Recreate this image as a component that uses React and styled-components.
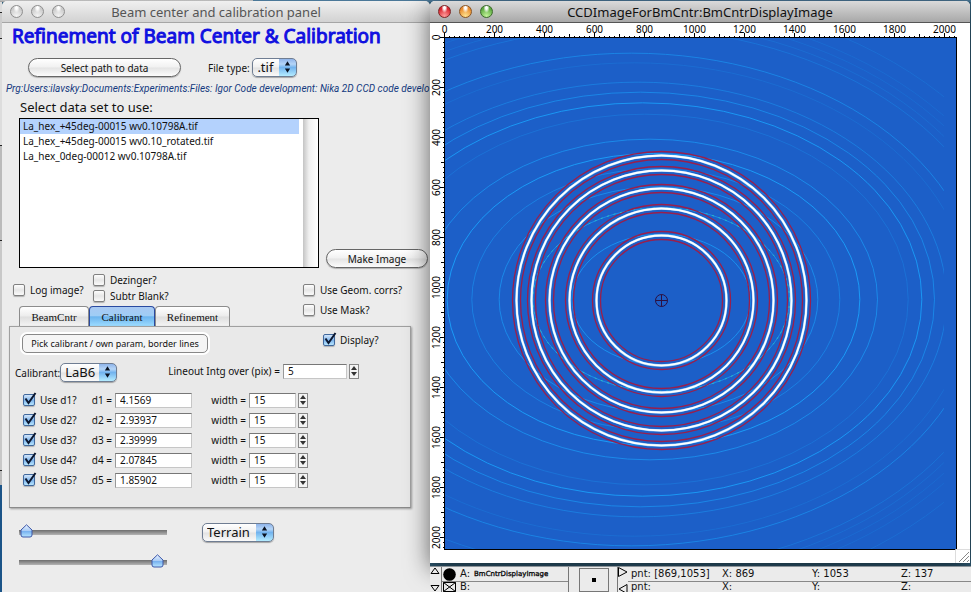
import React from "react";
import styled, { createGlobalStyle, css } from "styled-components";

const uiFont = '"Noto Sans", "Open Sans", sans-serif';
const svgUrl = (markup) => `url("data:image/svg+xml,${encodeURIComponent(markup)}")`;

const tick = svgUrl(
  '<svg xmlns="http://www.w3.org/2000/svg" viewBox="0 0 14 14"><path d="M2.5 6.5 L5.5 11 L12.5 1" fill="none" stroke="#0b1730" stroke-width="2"/></svg>'
);
const popupArrows = svgUrl(
  '<svg xmlns="http://www.w3.org/2000/svg" viewBox="0 0 18 18" preserveAspectRatio="none"><defs><linearGradient id="g" x2="0" y2="1"><stop offset="0" stop-color="#8fb4ea"/><stop offset=".3" stop-color="#b5d5f7"/><stop offset=".5" stop-color="#72b3ee"/><stop offset="1" stop-color="#b4ecff"/></linearGradient></defs><rect width="18" height="18" fill="url(#g)"/><path d="M9 2.5 L11.8 7 H6.2 Z M9 14.5 L11.8 10 H6.2 Z" fill="#0a1220"/></svg>'
);
const thumb = svgUrl(
  '<svg xmlns="http://www.w3.org/2000/svg" viewBox="0 0 13 14"><defs><linearGradient id="g" x2="0" y2="1"><stop offset="0" stop-color="#e8f1ff"/><stop offset=".5" stop-color="#a8cbf5"/><stop offset=".55" stop-color="#78b2f0"/><stop offset="1" stop-color="#b9e6ff"/></linearGradient></defs><path d="M6.500 .8 L12 6 V11 Q12 13 10 13 H3 Q1 13 1 11 V6 Z" fill="url(#g)" stroke="#3c56a8" stroke-width="1"/></svg>'
);

const GlobalStyle = createGlobalStyle`
  * { box-sizing: border-box; }
  body { margin: 0; overflow: hidden; font-family: ${uiFont}; font-size: 10px; color: #111; }
  button, input, select { font-family: inherit; font-size: inherit; color: inherit; margin: 0; }
`;

const Desktop = styled.div`
  display: flex;
  height: 100vh;
  padding: 1px 0 0 2px;
  overflow: hidden;
  background:
    linear-gradient(#c4c4c4, #9a9a9a) 0 0 / 253px 2px no-repeat,
    linear-gradient(#4b7898, #4b7898) 0 0 / 100% 2px no-repeat,
    linear-gradient(#dcdcdc 0 12px, #222 12px 13px, #ccc 13px 38px, #222 38px 39px, #ddd 39px 145px, #222 145px 146px, #bbb 146px 240px, #222 240px 241px, #c8c8c8 241px 470px, #222 470px 471px, #bbb 471px 485px, #1b5488 485px) 0 0 / 2px 100% no-repeat,
    #315e78;
`;

const PanelWindow = styled.main`
  flex: 0 1 428px;
  min-width: 0;
  display: flex;
  flex-direction: column;
  overflow: hidden;
  background: #ececec;
  border-radius: 5px 5px 0 0;
`;

const RightColumn = styled.div`
  flex: 1;
  min-width: 0;
  display: flex;
  flex-direction: column;
  z-index: 1;
`;

const ImageWindow = styled.section`
  margin-right: 1px;
  background: #fff;
  border-radius: 5px 5px 0 0;
  box-shadow: 0 6px 24px rgba(0, 0, 0, 0.6);
`;

const TitleBar = styled.header`
  flex: none;
  display: grid;
  grid-template-columns: 60px 1fr 60px;
  align-items: center;
  height: 22px;
  padding: 0 8px;
  border-radius: 5px 5px 0 0;
  border-bottom: 1px solid ${(p) => (p.$active ? "#555" : "#a5a5a5")};
  background: ${(p) =>
    p.$active ? "linear-gradient(#dadada, #a8a8a8)" : "linear-gradient(#f0f0f0, #d2d2d2)"};
  color: ${(p) => (p.$active ? "#111" : "#555")};
`;

const WindowTitle = styled.h2`
  margin: 0;
  font-size: 13px;
  line-height: 20px;
  font-weight: 400;
  text-align: center;
  white-space: nowrap;
`;

const Lights = styled.div`
  display: flex;
  gap: 8px;
`;

const Light = styled.button`
  width: 13px;
  height: 13px;
  padding: 0;
  border: 1px solid ${(p) => p.$edge};
  border-radius: 50%;
  background: radial-gradient(ellipse at 50% 15%, #fff 0 12%, transparent 40%),
    radial-gradient(circle at 50% 90%, ${(p) => p.$glow}, ${(p) => p.$fill} 70%);
`;

const Heading = styled.h1`
  margin: 0 0 9px 10px;
  font-size: 19px;
  line-height: 26px;
  font-weight: 400;
  color: #1010e0;
  -webkit-text-stroke: 1px #1010e0;
  white-space: nowrap;
`;

const FileRow = styled.div`
  display: flex;
  align-items: center;
  padding-left: 26px;
`;

const pill = css`
  height: 19px;
  padding: 0;
  line-height: 16px;
  white-space: nowrap;
  border: 1px solid #666;
  background: linear-gradient(#fff, #f1f1f1 48%, #e4e4e4 52%, #fcfcfc);
`;

const PillButton = styled.button`
  ${pill}
  width: ${(p) => p.$width};
  border-radius: 10px;
  box-shadow: 0 1px 1px rgba(0, 0, 0, 0.25);
`;

const WideButton = styled.button`
  ${pill}
  width: 186px;
  font-size: 9px;
  border-color: #888;
  border-radius: 5px;
  background: #f5f5f5;
  box-shadow: 0 0 0 2px #fff;
`;

const Caption = styled.label`
  white-space: nowrap;
  line-height: 16px;
  margin-left: ${(p) => p.$gap || "0"};
`;

const Popup = styled.select`
  appearance: none;
  width: ${(p) => p.$width};
  height: 19px;
  padding: 0 0 1px 4px;
  font-size: 13px;
  line-height: 16px;
  border: 1px solid #6f7d92;
  border-radius: 5px;
  background: ${popupArrows} right center / 17px 100% no-repeat,
    linear-gradient(#fff, #f0f0f0 48%, #e2e2e2 52%, #fafafa);
  box-shadow: 0 1px 1px rgba(0, 0, 0, 0.3);
`;

const PathText = styled.p`
  margin: 4px 0 1px 4px;
  font-family: Roboto, sans-serif;
  line-height: 16px;
  font-style: italic;
  color: #143a80;
  white-space: nowrap;
`;

const ListLabel = styled.h3`
  margin: 0 0 2px 18px;
  font-size: 13px;
  line-height: 18px;
  font-weight: 400;
`;

const ListRow = styled.div`
  display: flex;
  align-items: flex-end;
  justify-content: space-between;
  gap: 7px;
  padding: 0 2px 0 17px;
`;

const ListBox = styled.div`
  flex: 1;
  display: grid;
  grid-template-columns: 1fr 15px;
  height: 150px;
  border: 1px solid #000;
  background: #fff;
`;

const FileList = styled.ul`
  margin: 0 4px 0 0;
  padding: 0;
  list-style: none;
`;

const FileItem = styled.li`
  height: 15px;
  padding-left: 3px;
  line-height: 15px;
  white-space: nowrap;
  background: ${(p) => (p.$selected ? "#b4d2fd" : "transparent")};
`;

const ScrollTrack = styled.div`
  background: linear-gradient(90deg, #c4c4c4, #f0f0f0 40%, #fff);
`;

const Options = styled.div`
  display: grid;
  grid-template-columns: 80px 210px 1fr;
  padding: 4px 0 0 11px;
  height: 38px;
`;

const OptionColumn = styled.div`
  display: flex;
  flex-direction: column;
  gap: ${(p) => p.$gap || "0"};
  padding-top: ${(p) => p.$top || "0"};
`;

const CheckLabel = styled.label`
  display: flex;
  align-items: center;
  gap: 5px;
  height: 16px;
  line-height: 16px;
  white-space: nowrap;
`;

const Check = styled.input`
  appearance: none;
  position: relative;
  flex: none;
  width: 12px;
  height: 12px;
  border: 1px solid #808080;
  border-radius: 2px;
  background: linear-gradient(#fdfdfd, #e6e6e6 50%, #fafafa);
  box-shadow: 0 1px 1px rgba(0, 0, 0, 0.25);
  &:checked {
    border-color: #41689c;
    background: linear-gradient(#d3e6fb, #7fb5ec 55%, #b8e6ff);
  }
  &:checked::after {
    content: "";
    position: absolute;
    inset: -3px -3px -1px -1px;
    background: ${tick} center / 100% 100% no-repeat;
  }
`;

const Tabs = styled.div`
  display: flex;
  margin: 0 0 0 17px;
`;

const Tab = styled.button`
  width: ${(p) => p.$width};
  height: 20px;
  padding: 0;
  font-family: "Liberation Serif", serif;
  font-size: 11px;
  border: 1px solid ${(p) => (p.$selected ? "#2a4aa0" : "#8c8c8c")};
  border-bottom: 0;
  border-radius: 4px 4px 0 0;
  background: ${(p) =>
    p.$selected
      ? "linear-gradient(#a9c9f2, #9fcdf5 45%, #6cb4ee 52%, #9ddcff)"
      : "linear-gradient(#fff, #ececec 48%, #dedede 52%, #f4f4f4)"};
`;

const TabPanel = styled.section`
  margin: 0 19px 15px 7px;
  padding: 7px 6px 19px 5px;
  border: 1px solid #a0a0a0;
  border-bottom-color: #8a8a8a;
  background: #e9e9e9;
  box-shadow: 1px 1px 2px rgba(0, 0, 0, 0.35);
`;

const PanelRow = styled.div`
  display: flex;
  align-items: flex-start;
  padding-left: ${(p) => p.$indent || "0"};
  margin-bottom: ${(p) => p.$below || "0"};
`;

const DisplayToggle = styled.div`
  margin-left: 115px;
  margin-top: -2px;
`;

const Field = styled.div`
  display: flex;
  align-items: center;
  justify-content: flex-end;
`;

const NumberBox = styled.input`
  width: ${(p) => p.$width};
  height: 15px;
  margin-left: 3px;
  padding: 0 4px;
  border: 1px solid #c6c6c6;
  border-top-color: #777;
  border-left-color: #999;
  border-radius: 0;
  background: #fff;
`;

const Stepper = styled.div`
  display: flex;
  flex-direction: column;
  width: 10px;
  height: 15px;
  margin-left: 2px;
  border: 1px solid #888;
  background: #f4f4f4;
`;

const StepButton = styled.button`
  flex: 1;
  display: flex;
  align-items: center;
  justify-content: center;
  min-height: 0;
  padding: 0;
  border: 0;
  background: none;
`;

const Peaks = styled.div`
  display: grid;
  gap: 4px;
  padding-left: 8px;
`;

const PeakRow = styled.div`
  display: grid;
  grid-template-columns: 59px 110px 116px;
  align-items: center;
  height: 16px;
`;

const Footer = styled.div`
  display: grid;
  grid-template-columns: 148px 1fr;
  column-gap: 35px;
  row-gap: 11px;
  align-items: center;
  padding-left: 17px;
`;

const Slider = styled.input`
  appearance: none;
  width: 100%;
  height: 19px;
  background: linear-gradient(#6e6e6e, #b4b4b4) center / 100% 5px no-repeat;
  border-radius: 3px;
  &::-webkit-slider-thumb {
    appearance: none;
    width: 13px;
    height: 14px;
    margin-top: -4px;
    background: ${thumb} center / 100% 100% no-repeat;
  }
`;

const Chart = styled.svg`
  display: block;
  width: 100%;
  height: auto;
  font-family: ${uiFont};
  font-size: 10px;
`;

const InfoBar = styled.footer`
  flex: 1 0 26px;
  display: grid;
  grid-template-columns: 11px 128px 10px 30px 8px 11px 1fr;
  margin-top: 3px;
  overflow: hidden;
  background: #ebebeb;
  border-top: 1px solid #8c9499;
  font-family: "DejaVu Sans", sans-serif;
`;

const InfoArrows = styled.div`
  display: flex;
  flex-direction: column;
  justify-content: space-between;
  height: 28px;
  border-left: ${(p) => (p.$edge ? "1px solid #777" : "0")};
`;

const CursorList = styled.div`
  border-left: 1px solid #777;
  border-right: 1px solid #777;
`;

const lastRow = css`
  &:last-child {
    height: 10px;
    line-height: 10px;
    border-bottom: 0;
  }
`;

const CursorRow = styled.div`
  display: flex;
  align-items: center;
  gap: 4px;
  height: 15px;
  line-height: 14px;
  padding-left: 1px;
  border-bottom: 1px solid #888;
  white-space: nowrap;
  ${lastRow}
`;

const CursorName = styled.b`
  font-size: 7px;
  font-weight: 400;
  -webkit-text-stroke: 0.3px #000;
`;

const CursorPad = styled.div`
  display: flex;
  align-items: center;
  justify-content: center;
  height: 24px;
  margin-top: 1px;
  border: 1px solid #777;
  &::after {
    content: "";
    width: 4px;
    height: 4px;
    background: #000;
  }
`;

const Readout = styled.div`
  display: grid;
  grid-template-columns: 91px 90px 89px 1fr;
  height: 15px;
  padding-left: 3px;
  line-height: 14px;
  border-bottom: 1px solid #888;
  white-space: nowrap;
  ${lastRow}
`;

const files = [
  "La_hex_+45deg-00015 wv0.10798A.tif",
  "La_hex_+45deg-00015 wv0.10_rotated.tif",
  "La_hex_0deg-00012 wv0.10798A.tif",
];
const spacings = ["4.1569", "2.93937", "2.39999", "2.07845", "1.85902"];

const StepPair = ({ name }) => (
  <Stepper>
    <StepButton aria-label={`Increase ${name}`}>
      <svg width="6" height="4" viewBox="0 0 6 4"><path d="M3 0 L6 4 H0 Z" fill="#333" /></svg>
    </StepButton>
    <StepButton aria-label={`Decrease ${name}`}>
      <svg width="6" height="4" viewBox="0 0 6 4"><path d="M3 4 L6 0 H0 Z" fill="#333" /></svg>
    </StepButton>
  </Stepper>
);

const CheckBox = ({ children, checked }) => (
  <CheckLabel>
    <Check type="checkbox" defaultChecked={checked} />
    {children}
  </CheckLabel>
);

const WindowLights = ({ active }) => {
  const off = ["#8e8e8e", "#cacaca", "#f4f4f4"];
  const tones = active
    ? [["#7d2525", "#d8222b", "#ff9d9d"], ["#8a5523", "#e88a2c", "#ffe490"], ["#3c6a2c", "#5aa83f", "#c4f59a"]]
    : [off, off, off];
  return (
    <Lights>
      {["Close", "Minimize", "Zoom"].map((n, i) => (
        <Light key={n} aria-label={n} $edge={tones[i][0]} $fill={tones[i][1]} $glow={tones[i][2]} />
      ))}
    </Lights>
  );
};

// Diffraction arcs in thirds of a chart pixel: [cx, rx, ry, opacity]
const arcs = [
  [664, 268, 196, 0.75], [664, 385, 275, 0.7], [656, 478, 338, 0.65], [648, 552, 392, 0.5],
  [641, 619, 438, 0.9], [630, 683, 481, 0.65], [615, 790, 556, 0.28], [608, 838, 590, 0.85],
  [602, 882, 622, 0.6], [595, 925, 652, 0.45], [583, 1005, 710, 0.2], [575, 1045, 739, 0.55],
  [559, 1153, 815, 0.3], [554, 1182, 836, 0.2], [550, 1212, 857, 0.18], [545, 1242, 878, 0.18],
  [537, 1300, 920, 0.2],
];
const rings = [65, 92, 112, 130, 145];

const ImageChart = () => {
  const ticks = Array.from({ length: 103 }, (_, i) => i * 20);
  const majors = Array.from({ length: 11 }, (_, i) => i * 200);
  const len = (v) => (v % 200 === 0 ? 4 : v % 100 === 0 ? 3 : 1);
  const marks = ticks
    .map((v) => {
      const at = 14.5 + v / 4;
      return `M${at} 14 v-${len(v)} M14 ${at} h-${len(v)}`;
    })
    .join(" ");
  return (
    <Chart viewBox="0 0 540 540" role="img" aria-label="Detector image with calibrant rings">
      <defs>
        <clipPath id="detector"><rect width="1498" height="1536" /></clipPath>
      </defs>
      <rect x="14.5" y="14.500" width="512" height="512" fill="#1c5fc8" />
      <g transform="translate(14.5 14.5) scale(.33333)" clipPath="url(#detector)">
        <g transform="translate(-14 0)" fill="none" stroke="#1aa6ff" strokeWidth="2.8">
          {arcs.map(([cx, rx, ry, o]) => (
            <ellipse key={ry} cx={cx} cy="786" rx={rx} ry={ry} opacity={o} />
          ))}
          <ellipse cx="664" cy="786" rx="385" ry="275" stroke="#38d8b0" strokeWidth="2.4" strokeDasharray="6 14" opacity=".9" />
        </g>
      </g>
      <g fill="none">
        {rings.map((r) => (
          <g key={r}>
            <circle cx="231.5" cy="277.5" r={r - 4} stroke="#9a1f4c" strokeWidth="1.3" />
            <circle cx="231.5" cy="277.5" r={r + 4} stroke="#9a1f4c" strokeWidth="1.3" />
            <circle cx="231.5" cy="277.5" r={r} stroke="#8cc4f4" strokeWidth="2.6" />
            <circle cx="231.5" cy="277.5" r={r} stroke="#fff" strokeWidth="1.8" />
          </g>
        ))}
        <path d="M225.500 277.500 h12 M231.500 271.500 v12" stroke="#2c1040" />
        <circle cx="231.5" cy="277.5" r="6" stroke="#2c1040" />
      </g>
      <rect x="14.5" y="14.5" width="512" height="512" fill="none" stroke="#000" />
      <path d={marks} stroke="#000" />
      {majors.map((v) => (
        <text key={`x${v}`} x={14.5 + v / 4} y="10" textAnchor="middle">{v}</text>
      ))}
      {majors.map((v) => (
        <text key={`y${v}`} transform={`translate(10 ${14.5 + v / 4}) rotate(-90)`} textAnchor="middle">{v}</text>
      ))}
      <path d="M525.500 540 V526.500 H540" fill="none" stroke="#ddd" />
      <path d="M529 539 l10 -10 M533 539 l6 -6 M537 539 l2 -2" stroke="#888" />
    </Chart>
  );
};

const SmallArrow = ({ d }) => (
  <svg width="10" height="11" viewBox="0 0 10 11"><path d={d} fill="none" stroke="#000" /></svg>
);

export default function App() {
  return (
    <Desktop>
      <GlobalStyle />
      <PanelWindow>
        <TitleBar>
          <WindowLights />
          <WindowTitle>Beam center and calibration panel</WindowTitle>
        </TitleBar>
        <Heading>Refinement of Beam Center &amp; Calibration</Heading>
        <FileRow>
          <PillButton $width="153px">Select path to data</PillButton>
          <Caption htmlFor="file-type" $gap="27px">File type:&nbsp;</Caption>
          <Popup id="file-type" $width="45px"><option>.tif</option></Popup>
        </FileRow>
        <PathText>Prg:Users:ilavsky:Documents:Experiments:Files: Igor Code development: Nika 2D CCD code develo</PathText>
        <ListLabel>Select data set to use:</ListLabel>
        <ListRow>
          <ListBox>
            <FileList>
              {files.map((f, i) => <FileItem key={f} $selected={i === 0}>{f}</FileItem>)}
            </FileList>
            <ScrollTrack />
          </ListBox>
          <PillButton $width="102px">Make Image</PillButton>
        </ListRow>
        <Options>
          <OptionColumn $top="10px"><CheckBox>Log image?</CheckBox></OptionColumn>
          <OptionColumn><CheckBox>Dezinger?</CheckBox><CheckBox>Subtr Blank?</CheckBox></OptionColumn>
          <OptionColumn $top="10px" $gap="4px"><CheckBox>Use Geom. corrs?</CheckBox><CheckBox>Use Mask?</CheckBox></OptionColumn>
        </Options>
        <Tabs role="tablist">
          <Tab role="tab" $width="70px">BeamCntr</Tab>
          <Tab role="tab" $width="66px" $selected aria-selected="true">Calibrant</Tab>
          <Tab role="tab" $width="75px">Refinement</Tab>
        </Tabs>
        <TabPanel>
          <PanelRow $indent="7px" $below="10px">
            <WideButton>Pick calibrant / own param, border lines</WideButton>
            <DisplayToggle><CheckBox checked>Display?</CheckBox></DisplayToggle>
          </PanelRow>
          <PanelRow $below="10px">
            <Field>
              <Caption htmlFor="calibrant">Calibrant:</Caption>
              <Popup id="calibrant" $width="57px"><option>LaB6</option></Popup>
            </Field>
            <Field>
              <Caption htmlFor="lineout" $gap="51px">Lineout Intg over (pix) =</Caption>
              <NumberBox id="lineout" $width="64px" defaultValue="5" />
              <StepPair name="lineout" />
            </Field>
          </PanelRow>
          <Peaks>
            {spacings.map((d, i) => (
              <PeakRow key={d}>
                <CheckBox checked>{`Use d${i + 1}?`}</CheckBox>
                <Field>
                  <Caption htmlFor={`d${i}`}>{`d${i + 1} =`}</Caption>
                  <NumberBox id={`d${i}`} $width="77px" defaultValue={d} />
                </Field>
                <Field>
                  <Caption htmlFor={`w${i}`}>width =</Caption>
                  <NumberBox id={`w${i}`} $width="47px" defaultValue="15" />
                  <StepPair name={`width ${i + 1}`} />
                </Field>
              </PeakRow>
            ))}
          </Peaks>
        </TabPanel>
        <Footer>
          <Slider type="range" aria-label="Minimum" defaultValue="1" />
          <div><Popup aria-label="Color table" $width="72px"><option>Terrain</option></Popup></div>
          <Slider type="range" aria-label="Maximum" defaultValue="98" />
        </Footer>
      </PanelWindow>
      <RightColumn>
        <ImageWindow>
          <TitleBar $active>
            <WindowLights active />
            <WindowTitle>CCDImageForBmCntr:BmCntrDisplayImage</WindowTitle>
          </TitleBar>
          <ImageChart />
        </ImageWindow>
        <InfoBar>
          <InfoArrows>
            <SmallArrow d="M5 1 L9 6.500 H1 Z" />
            <SmallArrow d="M5 7 L9 1.500 H1 Z" />
          </InfoArrows>
          <CursorList>
            <CursorRow>
              <svg width="13" height="13" viewBox="0 0 13 13"><circle cx="6.5" cy="6.5" r="6.300" /></svg>
              <span>A:</span>
              <CursorName>BmCntrDisplayImage</CursorName>
            </CursorRow>
            <CursorRow>
              <svg width="13" height="10" viewBox="0 0 13 10"><path d="M.5 .5 H12.500 V9.500 H.5 Z L12.500 9.500 M12.500 .5 L.5 9.500" fill="none" stroke="#000" /></svg>
              <span>B:</span>
            </CursorRow>
          </CursorList>
          <div />
          <CursorPad />
          <div />
          <InfoArrows $edge>
            <SmallArrow d="M.5 .5 L9 5 L.5 9.500 Z" />
            <SmallArrow d="M9 .5 L1 5 L9 9.500 Z" />
          </InfoArrows>
          <div>
            <Readout><span>pnt: [869,1053]</span><span>X: 869</span><span>Y: 1053</span><span>Z: 137</span></Readout>
            <Readout><span>pnt:</span><span>X:</span><span>Y:</span><span>Z:</span></Readout>
          </div>
        </InfoBar>
      </RightColumn>
    </Desktop>
  );
}
